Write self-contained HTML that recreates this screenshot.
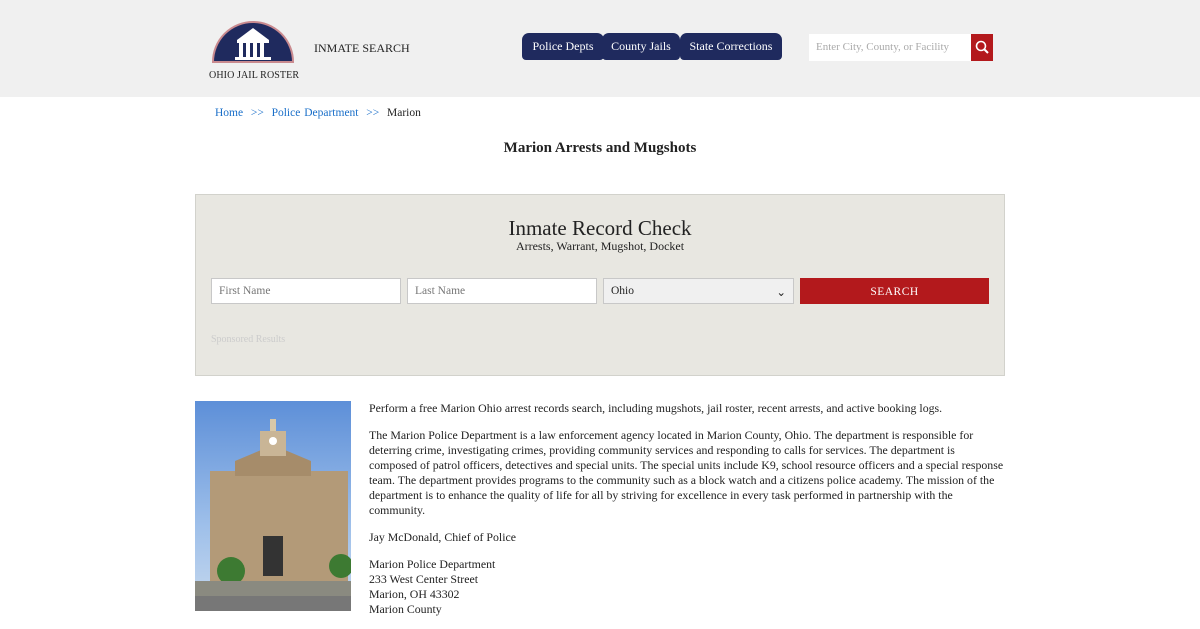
<!DOCTYPE html>
<html><head><meta charset="utf-8"><style>
*{box-sizing:border-box;margin:0;padding:0}
body{width:1200px;height:620px;overflow:hidden;background:#fff;font-family:"Liberation Serif",serif;color:#222}
.hdr{height:97px;background:#f0f0f0;position:relative}
.logo{position:absolute;left:209px;top:20px;width:88px}
.logo .t{font-size:10px;letter-spacing:.1px;text-align:center;margin-top:1px;white-space:nowrap}
.ins{position:absolute;left:314px;top:41px;font-size:12px}
.nav{position:absolute;top:33px;height:27px;background:#1f2a5e;color:#fff;font-size:12px;line-height:27px;text-align:center;border-radius:7px 7px 4px 4px}
.srch{position:absolute;left:809px;top:34px;width:162px;height:27px;background:#fff;font-size:11px;color:#aaa;padding:7px 7px}
.sb{position:absolute;left:971px;top:34px;width:22px;height:27px;background:#b3191c}
.bc{position:absolute;left:215px;top:107px;font-size:11.5px;word-spacing:1px}
.bc a{color:#1a6fc9;text-decoration:none}
h1{position:absolute;left:0;width:1200px;top:140px;text-align:center;font-size:15px;font-weight:bold}
.box{position:absolute;left:195px;top:194px;width:810px;height:182px;background:#e8e7e1;border:1px solid #d2d2cc}
.box h2{position:absolute;top:21px;width:100%;text-align:center;font-weight:normal;font-size:21px}
.box .s{position:absolute;top:44px;width:100%;text-align:center;font-size:12px}
.in{position:absolute;top:83px;height:26px;background:#fff;border:1px solid #c8c8c8;font-size:11.5px;color:#777;padding:6px 7px}
.btn{position:absolute;left:604px;top:83px;width:189px;height:26px;background:#b3191c;color:#fff;text-align:center;line-height:28px;font-size:11.5px;letter-spacing:.5px}
.sp{position:absolute;left:15px;top:139px;font-size:10px;color:#ccc}
.img{position:absolute;left:195px;top:401px;width:156px;height:210px;background:linear-gradient(#5d8fd8,#9fc0ea 60%,#c7d9ee)}
.txt{position:absolute;left:369px;top:401px;width:700px;font-size:11.85px;line-height:15px;white-space:nowrap}
.txt p{margin-bottom:12px}
</style></head><body>
<div class="hdr">
<div class="logo"><svg width="88" height="44" viewBox="0 0 88 44"><path d="M4 42 A40 40 0 0 1 84 42Z" fill="#1f2a5e" stroke="#c98a8f" stroke-width="2"/><path d="M44 8 L28 20 L60 20Z" fill="#fff"/><rect x="28" y="20" width="32" height="3" fill="#fff"/><rect x="30" y="23" width="4" height="14" fill="#fff"/><rect x="37" y="23" width="4" height="14" fill="#fff"/><rect x="44" y="23" width="4" height="14" fill="#fff"/><rect x="51" y="23" width="4" height="14" fill="#fff"/><rect x="26" y="37" width="36" height="3" fill="#fff"/></svg><div class="t">OHIO JAIL ROSTER</div></div>
<div class="ins">INMATE SEARCH</div>
<div class="nav" style="left:522px;width:82px">Police Depts</div>
<div class="nav" style="left:602px;width:78px">County Jails</div>
<div class="nav" style="left:680px;width:102px">State Corrections</div>
<div class="srch">Enter City, County, or Facility</div>
<div class="sb"><svg width="22" height="27" viewBox="0 0 22 27"><circle cx="10" cy="12" r="4.5" fill="none" stroke="#fff" stroke-width="1.6"/><path d="M13 15 L17 19" stroke="#fff" stroke-width="2"/></svg></div>
</div>
<div class="bc"><a>Home</a> &nbsp;<a>&gt;&gt;</a>&nbsp; <a>Police Department</a> &nbsp;<a>&gt;&gt;</a>&nbsp; Marion</div>
<h1>Marion Arrests and Mugshots</h1>
<div class="box"><h2>Inmate Record Check</h2><div class="s">Arrests, Warrant, Mugshot, Docket</div>
<div class="in" style="left:15px;width:190px">First Name</div>
<div class="in" style="left:211px;width:190px">Last Name</div>
<div class="in" style="left:407px;width:191px;background:#f0f0f0;color:#222">Ohio<span style="float:right">⌄</span></div>
<div class="btn">SEARCH</div>
<div class="sp">Sponsored Results</div></div>
<div class="img"><svg width="156" height="210" viewBox="0 0 156 210"><rect x="15" y="70" width="138" height="110" fill="#b39a78"/><path d="M40 60 L78 44 L116 60 L116 75 L40 75Z" fill="#a68c6a"/><rect x="65" y="30" width="26" height="25" fill="#c9b596"/><circle cx="78" cy="40" r="4" fill="#fff"/><rect x="75" y="18" width="6" height="12" fill="#d8c8a8"/><rect x="68" y="135" width="20" height="40" fill="#333"/><circle cx="36" cy="170" r="14" fill="#3d7a32"/><circle cx="146" cy="165" r="12" fill="#3d7a32"/><rect x="0" y="180" width="156" height="30" fill="#8a8a80"/><rect x="0" y="195" width="156" height="15" fill="#777"/></svg></div>
<div class="txt">
<p>Perform a free Marion Ohio arrest records search, including mugshots, jail roster, recent arrests, and active booking logs.</p>
<p>The Marion Police Department is a law enforcement agency located in Marion County, Ohio. The department is responsible for<br>deterring crime, investigating crimes, providing community services and responding to calls for services. The department is<br>composed of patrol officers, detectives and special units. The special units include K9, school resource officers and a special response<br>team. The department provides programs to the community such as a block watch and a citizens police academy. The mission of the<br>department is to enhance the quality of life for all by striving for excellence in every task performed in partnership with the<br>community.</p>
<p>Jay McDonald, Chief of Police</p>
<p>Marion Police Department<br>233 West Center Street<br>Marion, OH 43302<br>Marion County</p>
</div>
</body></html>
